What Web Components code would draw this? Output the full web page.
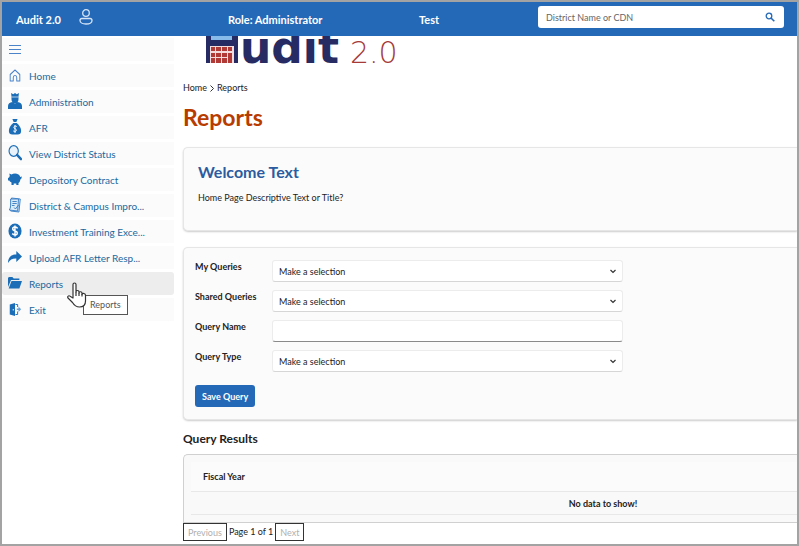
<!DOCTYPE html>
<html lang="en">
<head>
<meta charset="utf-8">
<title>Audit 2.0 - Reports</title>
<style>
  html, body { margin: 0; height: 100%; }
  body {
    box-sizing: border-box;
    font-family: Lato, "Open Sans", sans-serif;
    font-size: 9px;
    color: #222;
    background: #fff;
  }
</style>
</head>
<body>
<audit-app>
  <top-bar slot="header"></top-bar>
  <side-nav slot="nav">
    <nav-item icon="home">Home</nav-item>
    <nav-item icon="admin">Administration</nav-item>
    <nav-item icon="bag">AFR</nav-item>
    <nav-item icon="search">View District Status</nav-item>
    <nav-item icon="pig">Depository Contract</nav-item>
    <nav-item icon="doc">District &amp; Campus Impro...</nav-item>
    <nav-item icon="dollar">Investment Training Exce...</nav-item>
    <nav-item icon="share">Upload AFR Letter Resp...</nav-item>
    <nav-item icon="folder" tip="Reports" active>Reports</nav-item>
    <nav-item icon="exit">Exit</nav-item>
  </side-nav>
  <audit-logo></audit-logo>
  <page-heading></page-heading>
  <content-card>
    <welcome-text></welcome-text>
  </content-card>
  <content-card>
    <query-form></query-form>
  </content-card>
  <query-results></query-results>
</audit-app>

<script>
const ICONS = {
  home: '<path d="M2.500 7.500 8 3l5.500 4.500V14h-3.500v-3.500a2 2 0 0 0-4 0V14H2.500z" fill="none" stroke="#4a83c9" stroke-width="1.100" stroke-linejoin="round"/>',
  admin: '<path d="M3.500 0 6 1.200 8 0l2 1.200L12.500 0 12 3.500V6c0 2-1 3.500-2 4H6C5 9.500 4 8 4 6V3.500z"/><path d="M4 4h8" stroke="#fff" stroke-width=".7"/><path d="M0 16v-3c0-2.500 2-3.500 5-4l3 1.500L11 9c3 .5 5 1.500 5 4v3z"/>',
  bag: '<path d="M5 0h6L9.500 3h-3z"/><path d="M6 4h4c3 2 5 5 5 8 0 2.500-1.500 3.500-4 3.500H5C2.500 15.500 1 14.500 1 12c0-3 2-6 5-8z"/><path d="M10 7.500C7 6 5.500 9 8 9.700c3 .8 1.500 3.800-2 2.300M8 6v8" fill="none" stroke="#fff"/>',
  search: '<circle cx="6.500" cy="6" r="5.300" fill="#e9f2fb" stroke="#1b6db8" stroke-width="1.300"/><path d="m10.500 10 4.300 4" stroke="#1b6db8" stroke-width="2.600" stroke-linecap="round"/>',
  pig: '<path d="M0 7c1 0 1.500-1 2-2l-.5-2.500L4 3.500c2-1 5-1.500 8 0 1 .5 1.500 1.500 2 2.500l2-.5L15 8l-1 .5c0 2-1 3-2 3.500v2H9.500v-1.500h-3V14H4v-2.500C3 11 2 10.500 1.500 9.500H0z"/>',
  doc: '<g fill="#dcebf8" stroke="#3b7fc4"><path d="m4 1 10 1-1.500 13L3 14z"/><path d="M3 2h9l-1 12-9.500-1c2-2 1.500-7 1.500-11z"/><path d="M5 4.500h5M5 6.500h5M4.500 8.500h3" fill="none"/><path d="m7 10.500 1.500 1.500L12 8" fill="none"/></g>',
  dollar: '<circle cx="8" cy="8" r="7.500"/><path d="M11 5.300C8.500 3.200 5 4 5.300 6c.4 2.300 5.400 1.500 5.400 4 0 2.300-3.700 2.500-5.900.6M8 2.500v11" fill="none" stroke="#fff" stroke-width="1.600"/>',
  share: '<path d="m9.500 2 6.500 5.500L9.500 13V9.500C5 9.300 2.500 10.500 0 14c0-6 4-8.500 9.500-8.500z"/>',
  folder: '<path d="M0 12V3l1-1h4l1.500 1.500H13V5H3.500z"/><path d="M4 6h12l-3 7.500H.8z"/>',
  exit: '<path d="M2 3.500 8 2v13l-6-1.500z"/><path d="M8.500 3.500H11V6M11 10.500v3H8.500" fill="none" stroke="#1b6db8"/><path d="M10 7.500h2v-2l3 2.800-3 2.700V9h-2z" fill="#6aa0d8"/><path d="M6 8v1.500" stroke="#fff"/>'
};

class AuditApp extends HTMLElement {
  constructor() {
    super();
    this.attachShadow({ mode: "open" }).innerHTML = `
    <style>
    :host {
      display: flex;
      flex-direction: column;
      box-sizing: border-box;
      height: 100vh;
      border: 2px solid #a3a3a3;
      overflow: hidden;
    }
    .body {
      flex: 1;
      min-height: 0;
      display: grid;
      grid-template-columns: 172px minmax(0, 1fr);
      column-gap: 9px;
    }
    main {
      display: flex;
      flex-direction: column;
      min-width: 0;
    }
    </style>
    <slot name="header"></slot>
    <div class="body">
      <slot name="nav"></slot>
      <main><slot></slot></main>
    </div>
  `;
  }
}

class TopBar extends HTMLElement {
  constructor() {
    super();
    this.attachShadow({ mode: "open" }).innerHTML = `
    <style>
    :host {
      display: grid;
      grid-template-columns: 63px 149px 191px 1fr 246px;
      align-items: center;
      flex: none;
      position: relative;
      z-index: 1;
      height: 34px;
      box-sizing: border-box;
      padding: 0 13px 0 14px;
      background: #2469b8;
      color: #fff;
      font-size: 11px;
      font-weight: 700;
    }
    button {
      display: flex;
      padding: 0;
      border: 0;
      background: none;
      color: inherit;
      cursor: pointer;
    }
    .user { justify-self: start; margin-bottom: 4px; }
    form {
      display: flex;
      align-items: center;
      height: 22px;
      margin-bottom: 4px;
      padding: 0 9px 0 8px;
      border-radius: 3px;
      background: #fff;
    }
    input {
      flex: 1;
      min-width: 0;
      padding: 0;
      border: 0;
      outline: 0;
      font: 400 9px Lato, sans-serif;
      color: #444;
    }
    input::placeholder { color: #666; }
    form button { color: #2469b8; }
    </style>
    <span>Audit 2.0</span>
    <button class="user" aria-label="User">
      <svg width="14" height="16" viewBox="0 0 14 16" fill="none" stroke="#d5e4f5" stroke-width="1.300">
        <circle cx="7" cy="4" r="3.300"/>
        <path d="M3 9.500h8c1.500 0 2 .8 2 2 0 2-2.500 3.500-6 3.500s-6-1.500-6-3.500c0-1.200.5-2 2-2z"/>
      </svg>
    </button>
    <span>Role: Administrator</span>
    <span>Test</span>
    <form>
      <input type="text" placeholder="District Name or CDN" aria-label="District Name or CDN">
      <button type="button" aria-label="Search">
        <svg width="10" height="10" viewBox="0 0 10 10" fill="none" stroke="currentColor" stroke-width="1.300">
          <circle cx="4" cy="4" r="2.800"/>
          <path d="m6 6 3.300 3.300" stroke-width="1.600"/>
        </svg>
      </button>
    </form>
  `;
  }
}

class SideNav extends HTMLElement {
  constructor() {
    super();
    this.attachShadow({ mode: "open" }).innerHTML = `
    <style>
    :host { display: block; padding-top: 2px; }
    nav {
      display: flex;
      flex-direction: column;
      gap: 3px;
    }
    .toggle {
      display: flex;
      align-items: center;
      height: 23px;
      padding: 0 7px;
      border: 0;
      background: #fbfbfb;
    }
    </style>
    <nav>
      <button class="toggle" aria-label="Toggle menu">
        <svg width="12" height="10" viewBox="0 0 12 10" stroke="#4a83c9"><path d="M0 .5h12M0 4.500h12M0 8.500h12"/></svg>
      </button>
      <slot></slot>
    </nav>
  `;
  }
}

class NavItem extends HTMLElement {
  constructor() {
    super();
    this.shadowDOM = this.attachShadow({ mode: "open" });
  }

  connectedCallback() {
    const tip = this.getAttribute("tip");
    this.shadowDOM.innerHTML = `
    <style>
    :host {
      display: block;
      position: relative;
      background: #fbfbfb;
    }
    :host([active]) { background: #ededed; border-radius: 3px; }
    a {
      display: flex;
      align-items: center;
      gap: 7px;
      height: 23px;
      padding-left: 6px;
      color: #19699f;
      font-size: 10px;
      text-decoration: none;
      white-space: nowrap;
    }
    a svg { flex: none; margin-bottom: 2px; }
    .tip {
      position: absolute;
      z-index: 2;
      left: 81px;
      top: 23px;
      padding: 3px 6px;
      border: 1px solid #555;
      background: #fff;
      color: #555;
      font-size: 9px;
      line-height: 12px;
    }
    .hand {
      position: absolute;
      z-index: 3;
      left: 65px;
      top: 10px;
    }
    </style>
    <a href="#"><svg width="14" height="16" viewBox="0 0 16 16" preserveAspectRatio="none" fill="#1b6db8">${ICONS[this.getAttribute("icon")]}</svg><span><slot></slot></span></a>
    ${tip ? `<span class="tip" role="tooltip">${tip}</span>
    <svg class="hand" width="20" height="26" viewBox="0 0 20 26" fill="#fff" stroke="#333" stroke-width="1.200" stroke-linejoin="round">
      <path d="M6 16V2.500c0-2 3-2 3 0V10c0-2 3-2 3 0v1c0-1.800 3-1.600 3 .3v1c.5-1.500 3.500-1 3.500 1V19c0 4-2 6-6 6s-5.500-2-7-4.500L1 16c-1-2 1-3 2.500-1.500z"/>
      <path d="M9 10v4M12 11v3M15 12v2.500"/>
    </svg>` : ""}
  `;
  }
}

class AuditLogo extends HTMLElement {
  constructor() {
    super();
    this.attachShadow({ mode: "open" }).innerHTML = `
    <style>
    :host { display: block; height: 30px; padding-left: 22px; }
    svg { display: block; overflow: visible; }
    .name { font: 700 44px "DejaVu Sans", sans-serif; fill: #262c63; }
    .version { font: 200 30px "DejaVu Sans", sans-serif; fill: #a53a38; }
    </style>
    <svg width="198" height="30" viewBox="0 0 198 30" role="img" aria-label="Audit 2.0">
      <path d="M1 0h32v27h-4V10H5v17H1z" fill="#262c63"/>
      <path d="M6 0h21v4H6z" fill="#86bbea"/>
      <path d="M5 10h24v17H5z" fill="#f3dcdb"/>
      <path d="M6 11h4v4H6zm5 0h5v4h-5zm6 0h5v4h-5zm6 0h4v4h-4zM6 17h4v4H6zm5 0h5v4h-5zm6 0h5v4h-5zm6 0h4v10h-4zM6 22h4v5H6zm5 0h5v5h-5zm6 0h5v5h-5z" fill="#b13a37"/>
      <text class="name" x="35" y="27">udit</text>
      <text class="version" x="145" y="27">2.0</text>
    </svg>
  `;
  }
}

class PageHeading extends HTMLElement {
  constructor() {
    super();
    this.attachShadow({ mode: "open" }).innerHTML = `
    <style>
    :host { display: block; padding-top: 15px; }
    nav { display: flex; align-items: center; gap: 3px; line-height: 14px; }
    a { color: #222; text-decoration: none; }
    h1 {
      margin: 8px 0 16px;
      color: #b83c00;
      font-size: 23px;
      line-height: 28px;
    }
    </style>
    <nav aria-label="Breadcrumb">
      <a href="#">Home</a>
      <svg width="4" height="7" viewBox="0 0 4 7" fill="none" stroke="#333"><path d="m.5.5 3 3-3 3"/></svg>
      <a href="#">Reports</a>
    </nav>
    <h1>Reports</h1>
  `;
  }
}

class ContentCard extends HTMLElement {
  constructor() {
    super();
    this.attachShadow({ mode: "open" }).innerHTML = `
    <style>
    :host {
      display: block;
      margin-bottom: 16px;
      border: 1px solid #e6e6e6;
      border-right: 0;
      border-radius: 5px 0 0 5px;
      background: #fbfbfb;
      box-shadow: 0 1px 2px #ccc;
    }
    </style>
    <slot></slot>
  `;
  }
}

class WelcomeText extends HTMLElement {
  constructor() {
    super();
    this.attachShadow({ mode: "open" }).innerHTML = `
    <style>
    :host { display: block; padding: 14px 14px 25px; }
    h2 {
      margin: 0 0 9px;
      color: #2c5b9f;
      font-size: 16px;
      line-height: 20px;
    }
    p { margin: 0; line-height: 14px; }
    </style>
    <h2>Welcome Text</h2>
    <p>Home Page Descriptive Text or Title?</p>
  `;
  }
}

class QueryForm extends HTMLElement {
  constructor() {
    super();
    this.attachShadow({ mode: "open" }).innerHTML = `
    <style>
    :host { display: block; padding: 12px 11px; }
    .row {
      display: grid;
      grid-template-columns: 77px minmax(0, 351px);
      align-items: start;
      margin-bottom: 8px;
    }
    label { font-weight: 700; line-height: 14px; }
    .field { position: relative; display: flex; }
    select, input {
      appearance: none;
      box-sizing: border-box;
      width: 100%;
      height: 22px;
      padding: 0 6px;
      border: 1px solid #ececec;
      border-bottom-color: #d6d6d6;
      border-radius: 3px;
      background: #fff;
      color: #222;
      font: 400 9px Lato, sans-serif;
    }
    input { border-bottom-color: #8a8a8a; }
    .field svg {
      position: absolute;
      right: 7px;
      top: 9px;
      pointer-events: none;
    }
    button {
      height: 22px;
      margin-top: 5px;
      padding: 0 7px;
      border: 0;
      border-radius: 3px;
      background: #2469b8;
      color: #fff;
      font: 700 9px Lato, sans-serif;
    }
    </style>
    <form>
      ${this.select("mine", "My Queries")}
      ${this.select("shared", "Shared Queries")}
      <div class="row"><label for="name">Query Name</label><div class="field"><input id="name" type="text"></div></div>
      ${this.select("type", "Query Type")}
      <button type="button">Save Query</button>
    </form>
  `;
  }

  select(id, label) {
    return `<div class="row">
        <label for="${id}">${label}</label>
        <div class="field">
          <select id="${id}"><option>Make a selection</option></select>
          <svg width="6" height="5" viewBox="0 0 6 5" fill="none" stroke="#333" stroke-width="1.200"><path d="m.5 1 2.500 2.500L5.500 1"/></svg>
        </div>
      </div>`;
  }
}

class QueryResults extends HTMLElement {
  constructor() {
    super();
    this.attachShadow({ mode: "open" }).innerHTML = `
    <style>
    :host { display: block; margin-top: -5px; }
    h2 { margin: 0 0 8px; font-size: 12px; line-height: 15px; }
    .box {
      padding: 7px 0 7px 7px;
      border: 1px solid #d0d0d0;
      border-right: 0;
      border-radius: 5px 0 0 0;
      background: #f9f9f9;
      overflow: hidden;
    }
    table { width: 100%; border-collapse: collapse; }
    th, td { padding: 0; border-bottom: 1px solid #e8e8e8; font-weight: 700; }
    th { height: 29px; padding-left: 12px; background: #fbfbfb; text-align: left; }
    td { height: 22px; padding-left: 218px; text-align: center; }
    .pager { display: flex; align-items: center; gap: 2px; line-height: 12px; }
    .pager button {
      height: 18px;
      padding: 0 4px;
      border: 1px solid #333;
      background: #fff;
      color: #b0b0b0;
      font: 400 9px Lato, sans-serif;
    }
    </style>
    <h2>Query Results</h2>
    <div class="box">
      <table>
        <thead><tr><th>Fiscal Year</th></tr></thead>
        <tbody><tr><td>No data to show!</td></tr></tbody>
      </table>
    </div>
    <div class="pager">
      <button disabled>Previous</button>
      <span>Page 1 of 1</span>
      <button disabled>Next</button>
    </div>
  `;
  }
}

customElements.define("audit-app", AuditApp);
customElements.define("top-bar", TopBar);
customElements.define("side-nav", SideNav);
customElements.define("nav-item", NavItem);
customElements.define("audit-logo", AuditLogo);
customElements.define("page-heading", PageHeading);
customElements.define("content-card", ContentCard);
customElements.define("welcome-text", WelcomeText);
customElements.define("query-form", QueryForm);
customElements.define("query-results", QueryResults);
</script>
</body>
</html>
